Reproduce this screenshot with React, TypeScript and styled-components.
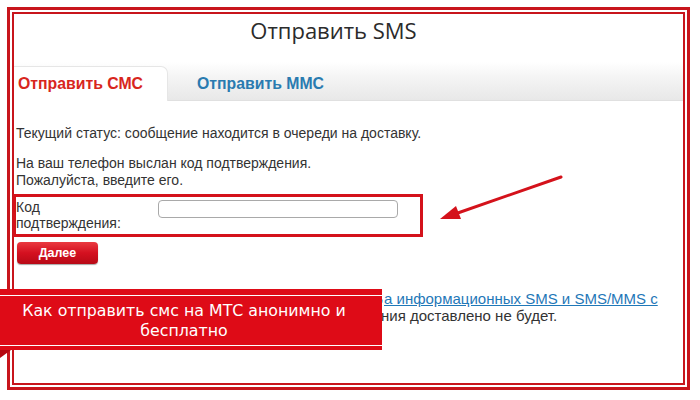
import React from 'react';
import styled, { createGlobalStyle } from 'styled-components';

const GlobalStyle = createGlobalStyle`
  html, body {
    margin: 0;
    padding: 0;
    background: #ffffff;
  }
  body {
    width: 700px;
    height: 400px;
    overflow: hidden;
    font-family: "Liberation Sans", Arial, sans-serif;
  }
`;

const Page = styled.div`
  position: relative;
  width: 700px;
  height: 400px;
  padding: 7px 10px 10px 7px;
  box-sizing: border-box;
`;

const OuterFrame = styled.div`
  height: 100%;
  box-sizing: border-box;
  border: 3px solid #c8151c;
  padding: 2px;
`;

const InnerFrame = styled.div`
  height: 100%;
  box-sizing: border-box;
  border: 2px solid #c8151c;
  display: flex;
  flex-direction: column;
`;

const Title = styled.h1`
  margin: 0;
  height: 48px;
  display: flex;
  align-items: flex-start;
  justify-content: center;
  padding: 1px 30px 0 0;
  box-sizing: border-box;
  font-family: "Open Sans", "Noto Sans", sans-serif;
  font-weight: 400;
  font-size: 22px;
  line-height: 30px;
  color: #2b2b2b;
`;

const TabBar = styled.div`
  height: 38px;
  display: flex;
  align-items: flex-end;
  background: linear-gradient(#ffffff 0%, #f4f4f4 40%, #e8e8e8 100%);
  border-bottom: 1px solid #e0e0e0;
`;

const Tab = styled.div<{ $active?: boolean }>`
  height: 35px;
  display: flex;
  align-items: center;
  box-sizing: border-box;
  padding: ${(p) => (p.$active ? '0 0 0 4px' : '0 0 0 29px')};
  width: ${(p) => (p.$active ? '154px' : 'auto')};
  background: ${(p) => (p.$active ? '#ffffff' : 'transparent')};
  border-top-right-radius: 7px;
  border-top: ${(p) => (p.$active ? '1px solid #e6e6e6' : 'none')};
  border-right: ${(p) => (p.$active ? '1px solid #e6e6e6' : 'none')};
  margin-bottom: -1px;
  font-weight: 700;
  font-size: 15.8px;
  color: ${(p) => (p.$active ? '#d8261d' : '#2a7bb0')};
`;

const Body = styled.div`
  position: relative;
  flex: 1;
  padding: 24px 0 0 2px;
  font-size: 14px;
  line-height: 17px;
  color: #333333;
`;

const Para = styled.p`
  margin: 0 0 13px;
`;

const CodeRow = styled.div`
  width: 410px;
  height: 43px;
  box-sizing: border-box;
  margin: -8px 0 0 -3px;
  border: 3px solid #d4121b;
  display: flex;
  align-items: flex-start;
  padding-top: 2px;
`;

const CodeLabel = styled.label`
  width: 142px;
  line-height: 16px;
  font-size: 14px;
  color: #333333;
`;

const CodeInput = styled.input`
  width: 240px;
  height: 18px;
  box-sizing: border-box;
  margin-top: 1px;
  border: 1px solid #a9a9a9;
  border-radius: 4px;
  background: #ffffff;
  outline: none;
`;

const NextButton = styled.button`
  margin: 5px 0 0 1px;
  width: 81px;
  height: 22px;
  border: none;
  border-radius: 4px;
  background: linear-gradient(#ea3a40 0%, #d41020 50%, #b80a16 100%);
  box-shadow: 0 1px 1px rgba(0, 0, 0, 0.35);
  color: #ffffff;
  font-family: "Liberation Sans", Arial, sans-serif;
  font-weight: 700;
  font-size: 12.5px;
  padding: 0;
`;

const Notes = styled.div`
  margin-top: 23px;
  font-size: 15px;
  line-height: 17px;
  color: #333333;
`;

const NoteLine = styled.div`
  white-space: nowrap;
  display: flex;
`;

const Covered = styled.span<{ $width: number }>`
  display: inline-block;
  width: ${(p) => p.$width}px;
  overflow: hidden;
  white-space: nowrap;
`;

const NoteLink = styled.a`
  color: #1f78b8;
  text-decoration: underline;
`;

const Banner = styled.div`
  position: absolute;
  left: 0;
  top: 289px;
  width: 382px;
  height: 61px;
  box-sizing: border-box;
  background: #de0b17;
  padding: 6px 0 4px;
  display: flex;
`;

const BannerInner = styled.div`
  flex: 1;
  border-top: 1px solid #ffffff;
  border-bottom: 1px solid #ffffff;
  display: flex;
  align-items: center;
  justify-content: center;
  text-align: center;
  font-family: "DejaVu Sans", Verdana, sans-serif;
  font-size: 15.8px;
  line-height: 20px;
  color: #ffffff;
  padding-right: 14px;
`;

const Fold = styled.div`
  position: absolute;
  left: 0;
  top: 350px;
  width: 0;
  height: 0;
  border-top: 8px solid #b5070f;
  border-right: 11px solid transparent;
`;

const Arrow = styled.svg`
  position: absolute;
  left: 436px;
  top: 172px;
`;

export default function App() {
  return (
    <>
      <GlobalStyle />
      <Page>
        <OuterFrame>
          <InnerFrame>
            <Title>Отправить SMS</Title>
            <TabBar>
              <Tab $active>Отправить СМС</Tab>
              <Tab>Отправить ММС</Tab>
            </TabBar>
            <Body>
              <Para>Текущий статус: сообщение находится в очереди на доставку.</Para>
              <Para>
                На ваш телефон выслан код подтверждения.
                <br />
                Пожалуйста, введите его.
              </Para>
              <CodeRow>
                <CodeLabel htmlFor="code">
                  Код
                  <br />
                  подтверждения:
                </CodeLabel>
                <CodeInput id="code" type="text" />
              </CodeRow>
              <NextButton>Далее</NextButton>
              <Notes>
                <NoteLine>
                  <NoteLink href="#">
                    <Covered $width={368}>Абонент может отказаться от получения рекламных, </Covered>а информационных SMS и SMS/MMS с
                  </NoteLink>
                </NoteLine>
                <NoteLine>
                  <Covered $width={365}>сайта. Сообщение абоненту, запретившему их получе</Covered>ния доставлено не будет.
                </NoteLine>
              </Notes>
            </Body>
          </InnerFrame>
        </OuterFrame>
        <Arrow width="130" height="52" viewBox="0 0 130 52">
          <line x1="125" y1="5" x2="16" y2="43" stroke="#d4121b" strokeWidth="3" strokeLinecap="round" />
          <polygon points="4,47 20,34 25,47" fill="#d4121b" />
        </Arrow>
        <Banner>
          <BannerInner>
            Как отправить смс на МТС анонимно и
            <br />
            бесплатно
          </BannerInner>
        </Banner>
        <Fold />
      </Page>
    </>
  );
}
